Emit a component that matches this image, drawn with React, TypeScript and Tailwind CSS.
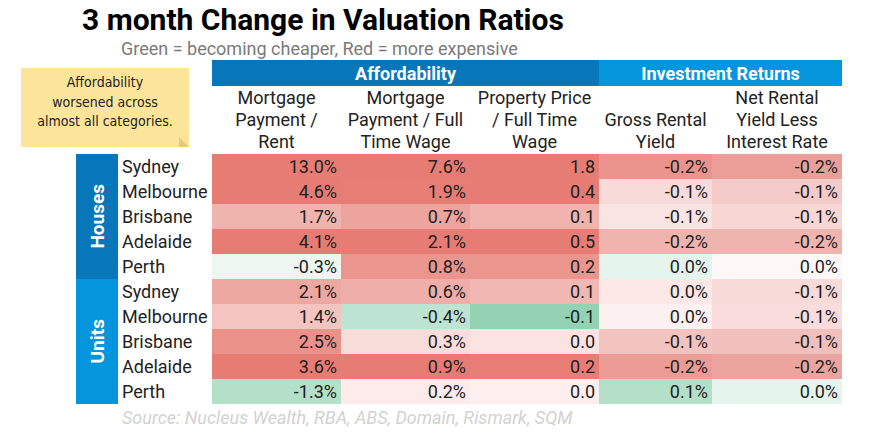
import React from "react";

type Cell = [string, string];
type Row = { city: string; cells: Cell[] };

const houses: Row[] = [
  { city: "Sydney", cells: [["13.0%", "#E67C73"], ["7.6%", "#E67C73"], ["1.8", "#E67C73"], ["-0.2%", "#EB948D"], ["-0.2%", "#EC9F99"]] },
  { city: "Melbourne", cells: [["4.6%", "#E67C73"], ["1.9%", "#E77D74"], ["0.4", "#E67C73"], ["-0.1%", "#F8DAD8"], ["-0.1%", "#F4CBC8"]] },
  { city: "Brisbane", cells: [["1.7%", "#F0B4AF"], ["0.7%", "#EDA49E"], ["0.1", "#F0B3AE"], ["-0.1%", "#FAE4E3"], ["-0.1%", "#F7D6D3"]] },
  { city: "Adelaide", cells: [["4.1%", "#E67C73"], ["2.1%", "#E67C73"], ["0.5", "#E67C73"], ["-0.2%", "#F0B4AF"], ["-0.2%", "#F0B4AF"]] },
  { city: "Perth", cells: [["-0.3%", "#EDF6F1"], ["0.8%", "#EA958E"], ["0.2", "#EA958E"], ["0.0%", "#E5F4EC"], ["0.0%", "#FDF7F7"]] },
];

const units: Row[] = [
  { city: "Sydney", cells: [["2.1%", "#EEA8A2"], ["0.6%", "#F0AEA9"], ["0.1", "#F1B7B3"], ["0.0%", "#FBE8E7"], ["-0.1%", "#F8DAD8"]] },
  { city: "Melbourne", cells: [["1.4%", "#F3C4C0"], ["-0.4%", "#BDE4D2"], ["-0.1", "#93D3B4"], ["0.0%", "#FCF1F0"], ["-0.1%", "#FADCDD"]] },
  { city: "Brisbane", cells: [["2.5%", "#EA918A"], ["0.3%", "#F9DDDB"], ["0.0", "#FBE3E1"], ["-0.1%", "#F3C3BF"], ["-0.1%", "#F2C0BC"]] },
  { city: "Adelaide", cells: [["3.6%", "#E67C73"], ["0.9%", "#E67C73"], ["0.2", "#E77D75"], ["-0.2%", "#EC9B95"], ["-0.2%", "#ECA49E"]] },
  { city: "Perth", cells: [["-1.3%", "#B4E0CA"], ["0.2%", "#FCEBEA"], ["0.0", "#FCEFEE"], ["0.1%", "#B4E0CA"], ["0.0%", "#E5F4EC"]] },
];

const widths = ["w-[129px]", "w-[129px]", "w-[129px]", "w-[113px]", "w-[130px]"];

const headings: string[][] = [
  ["Mortgage", "Payment /", "Rent"],
  ["Mortgage", "Payment / Full", "Time Wage"],
  ["Property Price", "/ Full Time", "Wage"],
  ["Gross Rental", "Yield"],
  ["Net Rental", "Yield Less", "Interest Rate"],
];

function Group({ label, rows, color }: { label: string; rows: Row[]; color: string }) {
  return (
    <div className="flex">
      <div className={`w-[42px] h-[125px] flex items-center justify-center ${color}`}>
        <span className="text-white font-bold text-[19px] [writing-mode:vertical-rl] rotate-180 leading-none">{label}</span>
      </div>
      <div className="flex flex-col">
        {rows.map((r, i) => (
          <div key={i} className="flex h-[25px]">
            <div className="w-[94px] pl-[4px] text-[18px] leading-[25px] text-[#222] whitespace-nowrap">{r.city}</div>
            {r.cells.map((c, j) => (
              <div
                key={j}
                className={`${widths[j]} text-right pr-[4px] text-[18px] leading-[25px] text-[#222]`}
                style={{ backgroundColor: c[1] }}
              >
                {c[0]}
              </div>
            ))}
          </div>
        ))}
      </div>
    </div>
  );
}

export default function App() {
  return (
    <div className="w-[869px] h-[435px] bg-white font-['Roboto',sans-serif] overflow-hidden">
      <div className="pl-[82px] h-[39px] text-[30px] leading-[40px] font-bold text-black whitespace-nowrap">3 month Change in Valuation Ratios</div>
      <div className="pl-[121px] h-[21px] text-[18px] leading-[20px] text-[#7a7a7a] whitespace-nowrap">Green = becoming cheaper, Red = more expensive</div>
      <div className="flex">
        <div className="w-[212px]">
          <div className="relative ml-[21px] mt-[8px] w-[168px] h-[79px] bg-[#FDE49B] flex flex-col items-center justify-center pb-[10px] text-[14px] leading-[19.5px] text-[#222] font-['Comic_Sans_MS','DejaVu_Sans_Condensed','Lato',cursive]">
            <div>Affordability</div>
            <div>worsened across</div>
            <div>almost all categories.</div>
            <div className="absolute right-0 bottom-0 w-0 h-0 border-l-[10px] border-l-[#E6C97E] border-t-[10px] border-t-transparent" />
          </div>
        </div>
        <div className="flex flex-col">
          <div className="flex h-[26px] text-white font-bold text-[18px]">
            <div className="w-[387px] bg-[#0877B9] flex items-center justify-center">Affordability</div>
            <div className="w-[243px] bg-[#0595DD] flex items-center justify-center">Investment Returns</div>
          </div>
          <div className="flex h-[68px]">
            {headings.map((h, i) => (
              <div key={i} className={`${widths[i]} flex flex-col justify-end items-center pb-[1px] text-[18px] leading-[22px] text-[#222]`}>
                {h.map((l, k) => (
                  <div key={k} className="whitespace-nowrap">{l}</div>
                ))}
              </div>
            ))}
          </div>
        </div>
      </div>
      <div className="pl-[76px] flex flex-col">
        <Group label="Houses" rows={houses} color="bg-[#0877B9]" />
        <Group label="Units" rows={units} color="bg-[#0595DD]" />
      </div>
      <div className="pl-[122px] text-[18px] leading-[28px] italic text-[#d2d2d2] whitespace-nowrap">Source: Nucleus Wealth, RBA, ABS, Domain, Rismark, SQM</div>
    </div>
  );
}
